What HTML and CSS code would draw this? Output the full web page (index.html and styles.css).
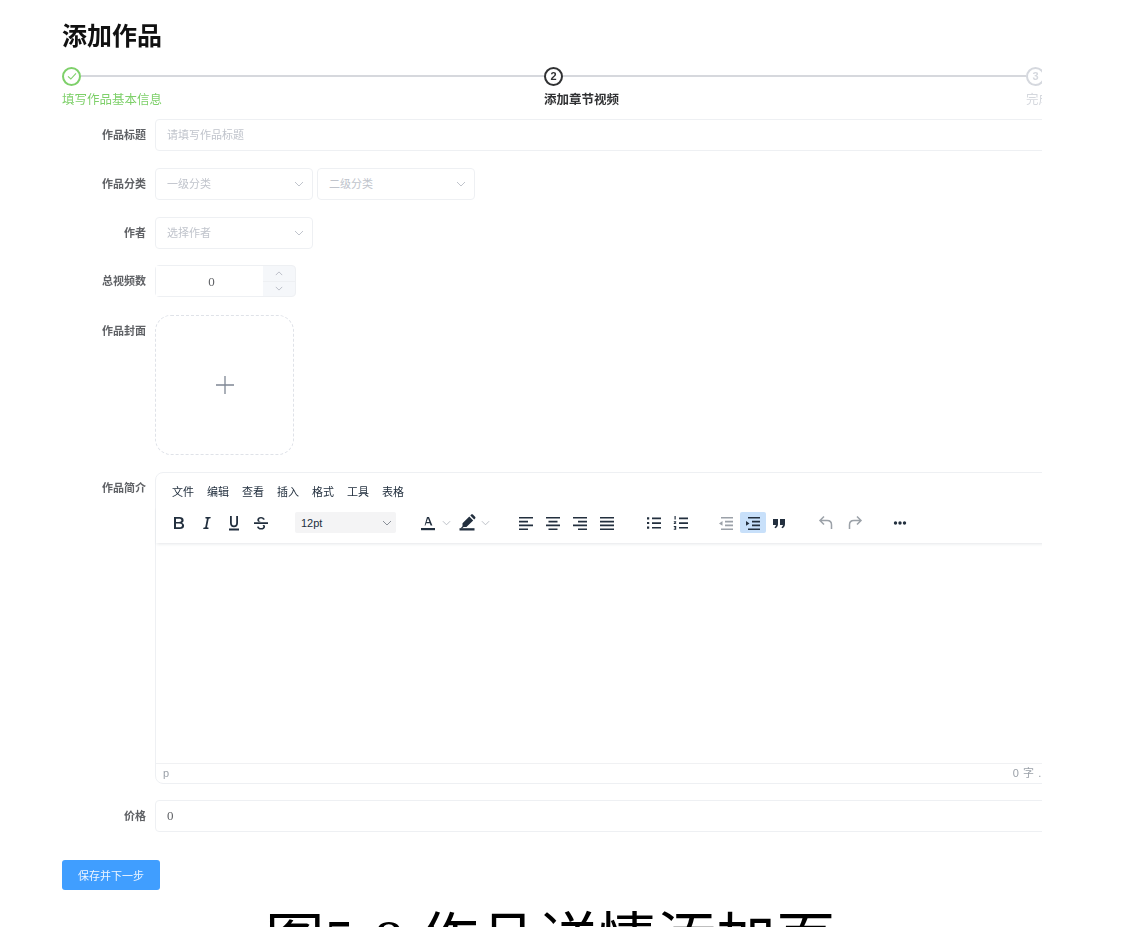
FILE: index.html
```html
<!DOCTYPE html>
<html lang="zh-CN">
<head>
<meta charset="utf-8">
<title>添加作品</title>
<link rel="stylesheet" href="styles.css">
</head>
<body>
<main class="page">
  <h1 class="title">添加作品</h1>
  <ol class="steps">
    <li class="step done">
      <div class="step-head">
        <span class="dot"><svg viewBox="0 0 12 12" width="12" height="12"><path d="M2 6.400l2.800 2.600L10 3.400" fill="none" stroke="currentColor" stroke-width="1.100"/></svg></span>
        <span class="line"></span>
      </div>
      <div class="step-label">填写作品基本信息</div>
    </li>
    <li class="step active">
      <div class="step-head">
        <span class="dot">2</span>
        <span class="line"></span>
      </div>
      <div class="step-label">添加章节视频</div>
    </li>
    <li class="step todo">
      <div class="step-head">
        <span class="dot">3</span>
      </div>
      <div class="step-label">完成发布</div>
    </li>
  </ol>

  <form class="form">
    <div class="row">
      <label class="label">作品标题</label>
      <div class="field input placeholder">请填写作品标题</div>
    </div>
    <div class="row">
      <label class="label">作品分类</label>
      <div class="selects">
        <div class="field select placeholder">一级分类<svg class="chev" viewBox="0 0 10 6" width="10" height="6"><path d="M1 1l4 4 4-4" fill="none" stroke="currentColor"/></svg></div>
        <div class="field select placeholder">二级分类<svg class="chev" viewBox="0 0 10 6" width="10" height="6"><path d="M1 1l4 4 4-4" fill="none" stroke="currentColor"/></svg></div>
      </div>
    </div>
    <div class="row">
      <label class="label">作者</label>
      <div class="field select placeholder">选择作者<svg class="chev" viewBox="0 0 10 6" width="10" height="6"><path d="M1 1l4 4 4-4" fill="none" stroke="currentColor"/></svg></div>
    </div>
    <div class="row row-number">
      <label class="label">总视频数</label>
      <div class="number">
        <div class="number-value">0</div>
        <div class="number-btns">
          <span class="number-btn"><svg viewBox="0 0 10 6" width="8" height="5"><path d="M1 5l4-4 4 4" fill="none" stroke="currentColor" stroke-width="1.200"/></svg></span>
          <span class="number-btn"><svg viewBox="0 0 10 6" width="8" height="5"><path d="M1 1l4 4 4-4" fill="none" stroke="currentColor" stroke-width="1.200"/></svg></span>
        </div>
      </div>
    </div>
    <div class="row">
      <label class="label">作品封面</label>
      <div class="upload"><svg viewBox="0 0 20 20" width="20" height="20"><path d="M10 1v18M1 10h18" stroke="#7f8794" stroke-width="1.300" fill="none"/></svg></div>
    </div>
    <div class="row row-editor">
      <label class="label">作品简介</label>
      <div class="editor">
        <div class="menubar">
          <span>文件</span><span>编辑</span><span>查看</span><span>插入</span><span>格式</span><span>工具</span><span>表格</span>
        </div>
        <div class="toolbar">
          <div class="group g-text">
            <span class="tool"><svg viewBox="0 0 24 24"><path d="M7 18V6h5.400c1.300 0 2.300.3 3 .8.800.6 1.200 1.500 1.200 2.500 0 1.300-.7 2.200-1.900 2.600 1.500.3 2.400 1.400 2.400 2.800 0 1.100-.4 1.900-1.200 2.500-.8.500-1.800.8-3.200.8H7zm2-7h3.100c1.400 0 2.300-.6 2.300-1.700 0-1.100-.8-1.600-2.400-1.600H9V11zm0 5.300h3.400c1.600 0 2.600-.6 2.600-1.800s-1-1.900-2.700-1.900H9v3.700z"/></svg></span>
            <span class="tool"><svg viewBox="0 0 24 24"><path d="M9.200 18l.2-1.300 1.800-.4 1.700-8.600-1.600-.4.200-1.300h5.200l-.2 1.300-1.800.4-1.700 8.600 1.600.4-.2 1.300H9.200z"/></svg></span>
            <span class="tool"><svg viewBox="0 0 24 24"><path d="M8 5h1.800v7c0 1.700.9 2.500 2.200 2.500s2.200-.8 2.200-2.500V5H16v7c0 2.800-1.600 4.200-4 4.200S8 14.800 8 12V5zM7 17.600h10v1.800H7z"/></svg></span>
            <span class="tool"><svg viewBox="0 0 24 24"><path d="M5 11.200h14V13H5zM15.800 8.600c-.3-1.500-1.700-2.600-3.800-2.600-2.200 0-3.700 1.100-3.700 2.800 0 .9.300 1.500.9 2h2.900c-1.300-.4-2-.9-2-1.900 0-.9.800-1.400 1.900-1.400 1.100 0 1.800.5 2 1.300l1.800-.2zM15.300 14h-2.100c.8.400 1.100.8 1.100 1.400 0 1-.9 1.600-2.200 1.600-1.300 0-2.100-.6-2.300-1.600l-1.800.3c.3 1.700 1.900 2.900 4.100 2.900 2.400 0 4-1.200 4-3.100 0-.6-.3-1.100-.8-1.500z"/></svg></span>
          </div>
          <div class="fontsize"><span>12pt</span><svg class="chev dark" viewBox="0 0 10 6" width="10" height="6"><path d="M1 1l4 4 4-4" fill="none" stroke="currentColor"/></svg></div>
          <div class="group g-color">
            <span class="tool"><svg viewBox="0 0 24 24"><path d="M11 6h2l3.400 8.500h-1.800l-.8-2.300h-3.600l-.8 2.300H8.600L11 6zm-.4 4.900h2.800L12 7.300l-1.400 3.600z"/><rect x="5" y="17" width="14" height="2.200"/></svg></span>
            <svg class="chev small" viewBox="0 0 10 6" width="10" height="6"><path d="M1 1l4 4 4-4" fill="none" stroke="currentColor"/></svg>
            <span class="tool"><svg viewBox="0 0 24 24"><path d="M7.500 12.200l6.800-6.700 3.900 3.900-6.800 6.700H8.700l-1.800 1.400-1.400-.1 2-2.100zM15.300 4.500l.9-.9c.5-.5 1.200-.5 1.700 0l2.200 2.200c.5.500.5 1.200 0 1.700l-.9.900z"/><rect x="4.500" y="17.200" width="15" height="2.300"/></svg></span>
            <svg class="chev small" viewBox="0 0 10 6" width="10" height="6"><path d="M1 1l4 4 4-4" fill="none" stroke="currentColor"/></svg>
          </div>
          <div class="group g-align">
            <span class="tool"><svg viewBox="0 0 24 24"><path d="M5 6h14v1.600H5zM5 9.800h9v1.600H5zM5 13.600h14v1.600H5zM5 17.400h9V19H5z"/></svg></span>
            <span class="tool"><svg viewBox="0 0 24 24"><path d="M5 6h14v1.600H5zM7.500 9.800h9v1.600h-9zM5 13.600h14v1.600H5zM7.500 17.400h9V19h-9z"/></svg></span>
            <span class="tool"><svg viewBox="0 0 24 24"><path d="M5 6h14v1.600H5zM10 9.800h9v1.600h-9zM5 13.600h14v1.600H5zM10 17.400h9V19h-9z"/></svg></span>
            <span class="tool"><svg viewBox="0 0 24 24"><path d="M5 6h14v1.600H5zM5 9.800h14v1.600H5zM5 13.600h14v1.600H5zM5 17.400h14V19H5z"/></svg></span>
          </div>
          <div class="group g-list">
            <span class="tool"><svg viewBox="0 0 24 24"><path d="M10 6.500h9v1.700h-9zM10 11.200h9v1.700h-9zM10 15.900h9v1.700h-9zM5 6.200h2.200v2.200H5zM5 10.900h2.200v2.200H5zM5 15.600h2.200v2.200H5z"/></svg></span>
            <span class="tool"><svg viewBox="0 0 24 24"><path d="M10 6.500h9v1.700h-9zM10 11.200h9v1.700h-9zM10 15.900h9v1.700h-9zM5.500 5h1.200v3.500H5.500zM4.800 10.200h2.400v1l-1.200 1h1.200v.9H4.800v-1l1.200-1H4.800zM4.800 15h2.400v3.700H4.800v-.9h1.300v-.5H5.200v-.8h.9v-.6H4.800z"/></svg></span>
          </div>
          <div class="group g-indent">
            <span class="tool off"><svg viewBox="0 0 24 24"><path d="M7 6h12v1.600H7zM11 9.800h8v1.600h-8zM11 13.600h8v1.600h-8zM7 17.400h12V19H7zM8.500 10v4.800L5 12.400z"/></svg></span>
            <span class="tool on"><svg viewBox="0 0 24 24"><path d="M7 6h12v1.600H7zM11 9.800h8v1.600h-8zM11 13.600h8v1.600h-8zM7 17.400h12V19H7zM5 10l3.500 2.400L5 14.800z"/></svg></span>
            <span class="tool"><svg viewBox="0 0 24 24"><path d="M6 8h5v5c0 1.900-.8 3.300-2.600 4.300l-1-1.100c1-.7 1.500-1.400 1.600-2.200H6V8zM13 8h5v5c0 1.900-.8 3.300-2.600 4.300l-1-1.100c1-.7 1.500-1.400 1.600-2.200h-3V8z"/></svg></span>
          </div>
          <div class="group g-history">
            <span class="tool off"><svg viewBox="0 0 24 24"><path d="M10 5.500L6 9.500l4 4M6.500 9.500h6.700c2.700 0 4.300 1.900 4.300 4.300V18" fill="none" stroke="#222f3e" stroke-width="1.500"/></svg></span>
            <span class="tool off"><svg viewBox="0 0 24 24"><path d="M14 5.500l4 4-4 4M17.500 9.500h-6.700C8.100 9.500 6.500 11.400 6.500 13.800V18" fill="none" stroke="#222f3e" stroke-width="1.500"/></svg></span>
          </div>
          <div class="group g-more">
            <span class="tool"><svg viewBox="0 0 24 24"><circle cx="7.500" cy="12" r="1.700"/><circle cx="12" cy="12" r="1.700"/><circle cx="16.500" cy="12" r="1.700"/></svg></span>
          </div>
        </div>
        <div class="edit-area"></div>
        <div class="statusbar"><span>p</span><span class="count">0 字 .</span></div>
      </div>
    </div>
    <div class="row">
      <label class="label">价格</label>
      <div class="field input value">0</div>
    </div>
    <button type="button" class="save">保存并下一步</button>
  </form>
</main>
<p class="caption">图5-8 作品详情添加页</p>
</body>
</html>
```
FILE: styles.css
```css
* { box-sizing: border-box; }
html, body { margin: 0; height: 927px; overflow: hidden; background: #fff; }
body {
  font-family: "Liberation Sans", "Noto Sans CJK SC", sans-serif;
  color: #606266;
}
.page {
  width: 1042px;
  padding-left: 62px;
  overflow: hidden;
  filter: blur(0.6px);
}
.title {
  margin: 0;
  padding-top: 21px;
  height: 66px;
  font-size: 25px;
  line-height: 30px;
  font-weight: 700;
  color: #111;
}
.steps {
  display: flex;
  width: 1446px;
  height: 53px;
  margin: 0;
  padding: 0;
  list-style: none;
}
.step { width: 482px; flex: none; }
.step-head { display: flex; align-items: center; height: 20px; }
.dot {
  width: 19px;
  height: 19px;
  flex: none;
  border: 2px solid currentColor;
  border-radius: 50%;
  display: flex;
  align-items: center;
  justify-content: center;
  font-size: 11px;
  font-weight: 700;
}
.line { flex: 1; height: 2px; background: #d6d8dd; }
.step-label { margin-top: 6px; font-size: 12.500px; line-height: 16px; }
.done { color: #7ed06a; }
.active { color: #303133; }
.active .step-label { font-weight: 700; }
.todo { color: #d5d8de; }

.form { width: 1126px; }
.row { display: flex; margin-bottom: 17px; }
.row-number { margin-top: -1px; margin-bottom: 18px; }
.row-editor { margin-bottom: 16px; }
.label {
  width: 84px;
  flex: none;
  margin-right: 9px;
  text-align: right;
  font-size: 11px;
  line-height: 32px;
  font-weight: 700;
  color: #606266;
}
.field {
  height: 32px;
  border: 1px solid #eef0f3;
  border-radius: 4px;
  background: #fff;
  padding: 0 11px;
  font-size: 11px;
  line-height: 30px;
  font-family: "Liberation Serif", "Noto Sans CJK SC", serif;
}
.input { width: 971px; }
.placeholder { color: #c0c4cc; font-family: "Liberation Sans", "Noto Sans CJK SC", sans-serif; }
.value { color: #606266; font-size: 13px; }
.selects { display: flex; gap: 4px; }
.select {
  width: 158px;
  padding-right: 8px;
  display: flex;
  align-items: center;
  justify-content: space-between;
}
.chev { color: #c0c4cc; flex: none; }
.chev.dark { color: #8a9099; }
.chev.small { color: #b5bac2; width: 9px; }
.number {
  width: 141px;
  height: 32px;
  display: flex;
  border: 1px solid #eef0f3;
  border-radius: 4px;
  background: #f5f7fa;
}
.number-value {
  width: 107px;
  padding-left: 4px;
  background: #fff;
  text-align: center;
  font-size: 13px;
  line-height: 32px;
  color: #606266;
  font-family: "Liberation Serif", serif;
}
.number-btns { flex: 1; display: flex; flex-direction: column; }
.number-btn {
  flex: 1;
  display: flex;
  align-items: center;
  justify-content: center;
  color: #b9bdc5;
}
.number-btn + .number-btn { border-top: 1px solid #eef0f3; }
.upload {
  width: 139px;
  height: 140px;
  border: 1px dashed #dfe2e8;
  border-radius: 16px;
  display: flex;
  align-items: center;
  justify-content: center;
}
.editor {
  width: 971px;
  height: 312px;
  border: 1px solid #eef0f3;
  border-radius: 8px 0 0 8px;
  display: flex;
  flex-direction: column;
  background: #fff;
}
.menubar {
  display: flex;
  gap: 13px;
  height: 33px;
  padding: 11px 0 0 16px;
  font-size: 11px;
  line-height: 16px;
  color: #222f3e;
}
.toolbar {
  display: flex;
  align-items: center;
  height: 37px;
  padding: 0 0 4px 9px;
  box-shadow: 0 2px 3px -1px rgba(34, 47, 62, .12);
  position: relative;
}
.group { display: flex; align-items: center; }
.tool {
  width: 27px;
  height: 21px;
  border-radius: 2px;
  display: flex;
  align-items: center;
  justify-content: center;
}
.tool svg { width: 24px; height: 24px; flex: none; fill: #222f3e; }
.tool.off svg { opacity: .45; }
.tool.on { background: #c8e0fa; }
.g-text .tool { width: 27.500px; }
.fontsize {
  width: 101px;
  height: 21px;
  margin-left: 20px;
  background: #f4f4f5;
  border-radius: 2px;
  padding: 0 4px 0 6px;
  display: flex;
  align-items: center;
  justify-content: space-between;
  font-size: 11px;
  color: #222f3e;
}
.g-color { margin-left: 20px; }
.g-color .tool { width: 24px; }
.g-color .tool + .chev { margin-right: 4px; margin-left: 2px; }
.g-align { margin-left: 18px; }
.g-list { margin-left: 20px; }
.g-indent { margin-left: 19px; }
.g-indent .tool { width: 26.500px; }
.g-history { margin-left: 19px; }
.g-history .tool { width: 29px; }
.g-more { margin-left: 17px; }
.edit-area { flex: 1; }
.statusbar {
  height: 20px;
  border-top: 1px solid #f0f1f3;
  display: flex;
  justify-content: space-between;
  padding: 0 83px 0 7px;
  font-size: 11px;
  line-height: 19px;
  color: #9aa0a8;
}
.count { letter-spacing: .6px; white-space: nowrap; }
.save {
  display: block;
  width: 98px;
  height: 30px;
  margin-top: 28px;
  border: 0;
  border-radius: 3px;
  background: #409eff;
  color: #eef6ff;
  font-family: "Liberation Sans", "Noto Sans CJK SC", sans-serif;
  font-size: 11px;
  font-weight: 400;
  padding: 0;
}
.caption {
  margin: 0;
  padding-left: 265px;
  padding-top: 16px;
  font-size: 59.500px;
  line-height: 70px;
  color: #000;
  font-family: "Liberation Serif", "Noto Sans CJK SC", serif;
  white-space: nowrap;
  filter: blur(0.4px);
}
```
